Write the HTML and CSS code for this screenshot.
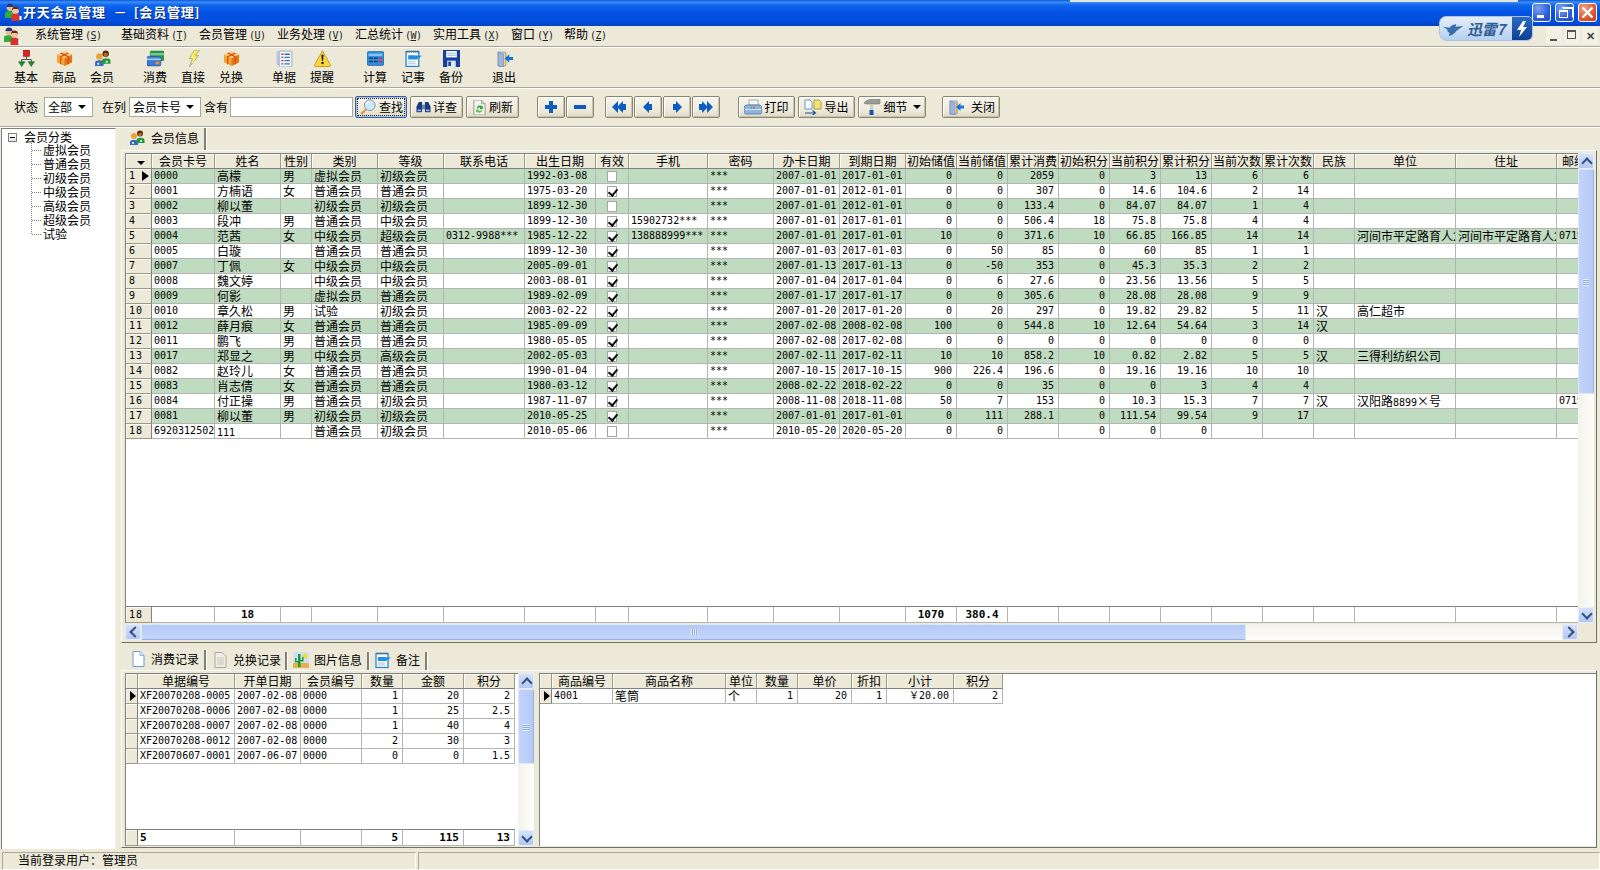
FILE: index.html
```html
<!DOCTYPE html>
<html lang="zh-CN">
<head>
<meta charset="utf-8">
<title>开天会员管理</title>
<link rel="stylesheet" href="styles.css">
</head>
<body>
<svg class="defs" width="0" height="0">
  <symbol id="people" viewBox="0 0 18 18">
    <circle cx="6" cy="4.5" r="3.400" fill="#e9bd93"/><path d="M2.500 4a3.500 3.500 0 0 1 7 0z" fill="#27347f"/><path d="M1 10c0-2.500 9-2.500 9 0v5H1z" fill="#2fae3f"/>
    <circle cx="11.500" cy="7.500" r="3.500" fill="#f3c79c"/><path d="M8 7.500a3.500 3.900 0 0 1 7 0l-1.200-1.500h-4.600z" fill="#6b2710"/><path d="M7.500 12.500c0-2.500 8-2.500 8 0v5.500h-8z" fill="#d8342a"/><path d="M15.500 13h2v4h-2z" fill="#fff"/>
  </symbol>
  <symbol id="members" viewBox="0 0 16 16">
    <circle cx="5" cy="6" r="3" fill="#e8a23c"/><path d="M1 15v-3c0-3 8-3 8 0v3z" fill="#3767c8"/><circle cx="4" cy="13" r="1" fill="#fff"/>
    <circle cx="11" cy="3.500" r="3" fill="#5b2a10"/><circle cx="11" cy="4.500" r="1.800" fill="#b86a2c"/><path d="M7.500 13v-3c0-3 8-3 8 0v3z" fill="#1f9a3a"/><circle cx="12" cy="11" r="1" fill="#fff"/>
  </symbol>
  <symbol id="base" viewBox="0 0 16 16">
    <rect x="5" y="0" width="6" height="6" fill="#e0201c" stroke="#8a1010" stroke-width=".5"/>
    <path d="M8 6v3M3.500 9h9M3.500 9v2M12.500 9v2" stroke="#555" fill="none"/>
    <path d="M0.500 11h6l-3 4.500zM9.500 11h6l-3 4.500z" fill="#1f8f2e" stroke="#0d5f1a" stroke-width=".5"/>
  </symbol>
  <symbol id="box" viewBox="0 0 18 16">
    <path d="M1 4l8-3.500 8 3.500v8l-8 4-8-4z" fill="#f7a62f"/>
    <path d="M1 4l8 4 8-4-8-3.500z" fill="#fbc76a"/><path d="M9 8v8l8-4V4z" fill="#e2771a"/>
    <path d="M5 2.200l8 4M13 2.200l-8 4M5 6v8.200M13 6v8.200" stroke="#d9471a" stroke-width="1.300" fill="none"/>
  </symbol>
  <symbol id="cards" viewBox="0 0 16 16">
    <rect x="3" y="1" width="13" height="9" rx="1" fill="#2f9c4d" stroke="#1c6b31" stroke-width=".5"/><path d="M3 3h13v2H3z" fill="#7ecf8c"/>
    <rect x="0" y="6" width="13" height="9" rx="1" fill="#3a7bd5" stroke="#1c4a8f" stroke-width=".5"/><path d="M0 8h13v1.500H0z" fill="#a8cbf2"/><rect x="8" y="11" width="3.500" height="2.500" fill="#e9902c"/>
  </symbol>
  <symbol id="bolt" viewBox="0 0 16 16">
    <path d="M9 0h5l-4 5h3L4 16l3-8H4z" fill="#f8e23c" stroke="#a0a090" stroke-width=".7"/><path d="M9.500 1l-3 6h2.500L7 12" stroke="#fff79a" fill="none"/>
  </symbol>
  <symbol id="bill" viewBox="0 0 16 16">
    <path d="M1 1.500h3v12H1z" fill="#c9d6ea" stroke="#8ca3c6" stroke-width=".5"/>
    <rect x="3" y="1" width="12" height="15" rx="1" fill="#eef3fb" stroke="#7f9ac4" stroke-width=".7"/>
    <path d="M8 4h5M8 7h5M8 10h5M8 13h5" stroke="#4a6fa8" stroke-width="1.200"/><path d="M5 4h2M5 10h2" stroke="#d8342a" stroke-width="1.200"/><path d="M5 7h2M5 13h2" stroke="#4a6fa8" stroke-width="1.200"/>
  </symbol>
  <symbol id="warn" viewBox="0 0 16 16">
    <path d="M8 .7L15.500 14a1 1 0 0 1-1 1.500H1.500a1 1 0 0 1-1-1.500z" fill="#fbd63a" stroke="#b08a10" stroke-width=".7"/><path d="M6.900 4.500h2.200L8.600 10H7.400z" fill="#222"/><circle cx="8" cy="12.200" r="1.200" fill="#222"/>
  </symbol>
  <symbol id="calc" viewBox="0 0 16 16">
    <rect x="0" y="1.500" width="16" height="13" rx="1.500" fill="#2f8fe0" stroke="#185a9c" stroke-width=".6"/><path d="M1.500 3.500h13v2h-13z" fill="#8cc9f6"/>
    <path d="M2 7h3.500v1.500H2zM2 10h3.500v1.500H2zM6.500 7H10v1.500H6.500zM6.500 10H10v1.500H6.500z" fill="#1d3557"/><path d="M11 7h3.500v1.500H11zM11 10h3.500v1.500H11z" fill="#d8342a"/>
  </symbol>
  <symbol id="note" viewBox="0 0 16 16">
    <rect x="1" y="1.500" width="12" height="14" fill="#f8fbff" stroke="#1f7fd0" stroke-width="1.200"/><path d="M2 .5v2M4 .5v2M6 .5v2M8 .5v2M10 .5v2M12 .5v2" stroke="#55606e" stroke-width=".8"/>
    <path d="M3 5h5L16 5.500 11 9H3z" fill="#1f8fe0"/><path d="M3 11h7M3 13h7" stroke="#a8c3e0"/>
  </symbol>
  <symbol id="disk" viewBox="0 0 16 16">
    <path d="M0 0h16v16H0z" fill="#13419c"/><rect x="3" y="1" width="10" height="6" fill="#fff"/><path d="M4 3h8M4 5h8" stroke="#9cb6e0"/><rect x="4" y="10" width="8" height="6" fill="#dfe7f4"/><rect x="5" y="11" width="2.500" height="4" fill="#13419c"/>
  </symbol>
  <symbol id="door" viewBox="0 0 16 16">
    <path d="M2 2h7v13H2z" fill="#dbe5f2" stroke="#6f8bb5" stroke-width=".7"/><path d="M2 2l5 1.500v12.500L2 15z" fill="#9fb6da" stroke="#5c78a4" stroke-width=".5"/><path d="M9 3v11" stroke="#e8a23c" stroke-width="1.500"/>
    <path d="M16 6.500h-3.500V4L8 8l4.500 4V9.500H16z" fill="#1677d6"/>
  </symbol>
  <symbol id="find" viewBox="0 0 18 18">
    <circle cx="11" cy="7" r="6" fill="#cfe6fb" stroke="#7d98b5" stroke-width="1.100"/><path d="M7.500 6a4 4 0 0 1 4-3" stroke="#fff" stroke-width="1.500" fill="none"/><path d="M6.800 11.500L1.500 17" stroke="#d99a3c" stroke-width="2.400"/>
  </symbol>
  <symbol id="binoc" viewBox="0 0 16 16">
    <path d="M3 2h3.500v11H.5v-6zM9.500 2H13l2.500 5v6h-6z" fill="#1d3b7a"/><path d="M6.500 5h3v5h-3z" fill="#5d7eb8"/><path d="M1.500 10h4v2h-4zM10.500 10h4v2h-4z" fill="#93aee0"/>
  </symbol>
  <symbol id="refresh" viewBox="0 0 16 16">
    <path d="M2 0h8l4 4v12H2z" fill="#f3f5f0" stroke="#7b7f72" stroke-width=".8"/><path d="M10 0v4h4" fill="#cfd3c6" stroke="#7b7f72" stroke-width=".6"/>
    <path d="M5 9a3.200 3.200 0 0 1 5.500-2l1-1v3.500H8l1.200-1.200A2 2 0 0 0 6 9z" fill="#1f9a3a"/><path d="M11 10.500a3.200 3.200 0 0 1-5.500 2l-1 1V10H8l-1.200 1.200a2 2 0 0 0 3.200-.7z" fill="#5dbf4a"/>
  </symbol>
  <symbol id="print" viewBox="0 0 18 16">
    <path d="M5 1h9v5H5z" fill="#f8f8f4" stroke="#8b8f96" stroke-width=".7"/><path d="M2 6h14l2 2v5c0 1-1 2-2 2H2c-1 0-2-1-2-2V8z" fill="#8fb4dd" stroke="#3f6a9e" stroke-width=".7"/><path d="M1 10h16v1H1z" fill="#d6e6f7"/><path d="M6 8.500h2v1H6z" fill="#2fae3f"/><path d="M9 8.500h2v1H9z" fill="#d8342a"/>
  </symbol>
  <symbol id="export" viewBox="0 0 18 16">
    <path d="M1 1h5l2 2v7H1z" fill="#fff" stroke="#3f7fd0" stroke-width=".8"/><path d="M10 1h5l2 2v7h-7z" fill="#f6e27a" stroke="#a08a20" stroke-width=".8"/><path d="M1 14h10M8.500 11.500L11.500 14l-3 2" stroke="#1a4fa0" stroke-width="1.100" fill="none"/>
  </symbol>
  <symbol id="hammer" viewBox="0 0 18 16">
    <path d="M1 4c2-3 6-3.500 8-3.500h8v3.500c0 1-1 1-2 1H5C3 5 2 5 1 4z" fill="#9a9d98" stroke="#5e605c" stroke-width=".5"/><path d="M7 5h3v7H7z" fill="#c9cbc6"/><path d="M6.500 11h4v5h-4z" fill="#1f4fb0"/>
  </symbol>
  <symbol id="doc" viewBox="0 0 16 16">
    <path d="M3 .5h7l4 4v11H3z" fill="#fdfeff" stroke="#6f9ad2"/><path d="M10 .5v4h4" fill="#d7e5f6" stroke="#6f9ad2" stroke-width=".7"/>
  </symbol>
  <symbol id="docg" viewBox="0 0 16 16">
    <path d="M3 .5h7l4 4v11H3z" fill="#efeee6" stroke="#a8a79c"/><path d="M5 6h7M5 8h7M5 10h7M5 12h7" stroke="#c6c5ba"/>
  </symbol>
  <symbol id="cactus" viewBox="0 0 16 16">
    <rect width="16" height="16" fill="#cfe0f4"/><path d="M0 11h16v5H0z" fill="#e6b04c"/><circle cx="12" cy="4" r="2.500" fill="#f7d92c"/><path d="M5 2h2.500v13H5zM2 6h1.500v3H5v1.500H2zM9 5h1.500v4.500h-3V8H9z" fill="#1c9a3a"/>
  </symbol>
  <symbol id="bird" viewBox="0 0 26 20">
    <path d="M1 8l8 1c2-3 5-4 8-4l-1 3 9-1-8 6c-2 3-5 5-9 6l1-4c-2 0-3-2-3-4z" fill="#3a6ea8"/>
  </symbol>
</svg>

<div class="app">
  <header class="titlebar">
    <svg class="ti"><use href="#people"/></svg>
    <span class="ttext">开天会员管理<span class="tdash">－</span>[会员管理]</span>
    <span class="strip"></span>
    <span class="wbtns">
      <span class="wb"><span class="wmin"></span></span>
      <span class="wb"><span class="wmax"></span></span>
      <span class="wb wclose"><svg width="15" height="15" viewBox="0 0 15 15"><path d="M2.500 2.500l10 10M12.500 2.500l-10 10" stroke="#fff" stroke-width="2.400"/></svg></span>
    </span>
  </header>

  <div class="badge">
    <svg class="bird"><use href="#bird"/></svg>
    <span class="btxt">迅雷7</span>
    <span class="bbolt"><svg width="14" height="18" viewBox="0 0 14 18"><path d="M8 1L2 10h4l-2 7 8-10H8l3-6z" fill="#fff"/></svg></span>
  </div>

  <nav class="menubar">
    <svg class="mi"><use href="#people"/></svg>
    <span class="mn first">系统管理<i>(<u>S</u>)</i></span>
    <span class="mn">基础资料<i>(<u>T</u>)</i></span>
    <span class="mn">会员管理<i>(<u>U</u>)</i></span>
    <span class="mn">业务处理<i>(<u>V</u>)</i></span>
    <span class="mn">汇总统计<i>(<u>W</u>)</i></span>
    <span class="mn">实用工具<i>(<u>X</u>)</i></span>
    <span class="mn short">窗口<i>(<u>Y</u>)</i></span>
    <span class="mn">帮助<i>(<u>Z</u>)</i></span>
    <span class="mdi">
      <span class="md"><span class="mdmin"></span></span>
      <span class="md"><span class="mdmax"></span></span>
      <span class="md mdx">✕</span>
    </span>
  </nav>

  <div class="toolbar">
    <div class="tb"><svg class="tbi"><use href="#base"/></svg><span>基本</span></div>
    <div class="tb"><svg class="tbi"><use href="#box"/></svg><span>商品</span></div>
    <div class="tb"><svg class="tbi"><use href="#members"/></svg><span>会员</span></div>
    <div class="tbgap"></div>
    <div class="tb"><svg class="tbi"><use href="#cards"/></svg><span>消费</span></div>
    <div class="tb"><svg class="tbi"><use href="#bolt"/></svg><span>直接</span></div>
    <div class="tb"><svg class="tbi"><use href="#box"/></svg><span>兑换</span></div>
    <div class="tbgap"></div>
    <div class="tb"><svg class="tbi"><use href="#bill"/></svg><span>单据</span></div>
    <div class="tb"><svg class="tbi"><use href="#warn"/></svg><span>提醒</span></div>
    <div class="tbgap"></div>
    <div class="tb"><svg class="tbi"><use href="#calc"/></svg><span>计算</span></div>
    <div class="tb"><svg class="tbi"><use href="#note"/></svg><span>记事</span></div>
    <div class="tb"><svg class="tbi"><use href="#disk"/></svg><span>备份</span></div>
    <div class="tbgap"></div>
    <div class="tb"><svg class="tbi"><use href="#door"/></svg><span>退出</span></div>
  </div>

  <div class="filter">
    <span class="lab">状态</span>
    <span class="sel s1">全部<b class="arr"></b></span>
    <span class="lab l2">在列</span>
    <span class="sel s2">会员卡号<b class="arr"></b></span>
    <span class="lab l3">含有</span>
    <span class="inp"></span>
    <div class="grp g1">
      <button class="btn w52 focus"><svg class="bi18"><use href="#find"/></svg>查找</button>
      <button class="btn w53"><svg class="bi"><use href="#binoc"/></svg>详查</button>
      <button class="btn w53"><svg class="bi"><use href="#refresh"/></svg>刷新</button>
    </div>
    <div class="grp g2">
      <button class="btn nav"><svg class="nv" viewBox="0 0 14 14"><path d="M5 1h4v4h4v4H9v4H5V9H1V5h4z"/></svg></button>
      <button class="btn nav"><svg class="nv" viewBox="0 0 14 14"><path d="M1 5h12v4H1z"/></svg></button>
    </div>
    <div class="grp g3">
      <button class="btn nav"><svg class="nv" viewBox="0 0 14 14"><path d="M0 7l6-6v12zM5 7l6-6v12zM10.500 4H14v6h-3.500z"/></svg></button>
      <button class="btn nav"><svg class="nv" viewBox="0 0 14 14"><path d="M2 7l6-6v3h3v6H8v3z"/></svg></button>
      <button class="btn nav"><svg class="nv" viewBox="0 0 14 14"><path d="M12 7L6 1v3H3v6h3v3z"/></svg></button>
      <button class="btn nav"><svg class="nv" viewBox="0 0 14 14"><path d="M14 7L8 1v12zM9 7L3 1v12zM3.500 4H0v6h3.500z"/></svg></button>
    </div>
    <div class="grp g4">
      <button class="btn w57"><svg class="bi18"><use href="#print"/></svg>打印</button>
      <button class="btn w57"><svg class="bi18"><use href="#export"/></svg>导出</button>
      <button class="btn w68"><svg class="bi18"><use href="#hammer"/></svg>细节<b class="arr"></b></button>
    </div>
    <div class="grp g5">
      <button class="btn w58"><svg class="bi18"><use href="#door"/></svg><span class="sp">关闭</span></button>
    </div>
  </div>

  <main class="main">
    <aside class="tree">
      <div class="troot"><span class="tbox"></span>会员分类</div>
      <ul class="tlist">
        <li>虚拟会员</li><li>普通会员</li><li>初级会员</li><li>中级会员</li><li>高级会员</li><li>超级会员</li><li>试验</li>
      </ul>
    </aside>

    <section class="work">
      <div class="tabs">
        <div class="tab on"><svg class="tabi"><use href="#members"/></svg>会员信息</div>
      </div>

      <div class="frame upper">
        <div class="gridbox">
          <table class="tbl tm">
            <colgroup><col class="c26"><col class="c63"><col class="c66"><col class="c31"><col class="c66"><col class="c66"><col class="c81"><col class="c71"><col class="c33"><col class="c79"><col class="c66"><col class="c66"><col class="c66"><col class="c51"><col class="c51"><col class="c51"><col class="c51"><col class="c51"><col class="c51"><col class="c51"><col class="c51"><col class="c41"><col class="c101"><col class="c101"><col class="c50"></colgroup>
            <thead><tr><th class="gh"><b class="arr"></b></th><th>会员卡号</th><th>姓名</th><th>性别</th><th>类别</th><th>等级</th><th>联系电话</th><th>出生日期</th><th>有效</th><th>手机</th><th>密码</th><th>办卡日期</th><th>到期日期</th><th>初始储值</th><th>当前储值</th><th>累计消费</th><th>初始积分</th><th>当前积分</th><th>累计积分</th><th>当前次数</th><th>累计次数</th><th>民族</th><th>单位</th><th>住址</th><th class="lft">邮编</th></tr></thead>
            <tbody>
<tr class="o"><td class="g cur">1</td><td>0000</td><td>高檬</td><td>男</td><td>虚拟会员</td><td>初级会员</td><td></td><td>1992-03-08</td><td><span class="cb"></span></td><td></td><td>***</td><td>2007-01-01</td><td>2017-01-01</td><td>0</td><td>0</td><td>2059</td><td>0</td><td>3</td><td>13</td><td>6</td><td>6</td><td></td><td></td><td></td><td></td></tr>
<tr><td class="g">2</td><td>0001</td><td>方楠语</td><td>女</td><td>普通会员</td><td>普通会员</td><td></td><td>1975-03-20</td><td><span class="cb on"></span></td><td></td><td>***</td><td>2007-01-01</td><td>2012-01-01</td><td>0</td><td>0</td><td>307</td><td>0</td><td>14.6</td><td>104.6</td><td>2</td><td>14</td><td></td><td></td><td></td><td></td></tr>
<tr class="o"><td class="g">3</td><td>0002</td><td>柳以董</td><td></td><td>初级会员</td><td>初级会员</td><td></td><td>1899-12-30</td><td><span class="cb"></span></td><td></td><td>***</td><td>2007-01-01</td><td>2012-01-01</td><td>0</td><td>0</td><td>133.4</td><td>0</td><td>84.07</td><td>84.07</td><td>1</td><td>4</td><td></td><td></td><td></td><td></td></tr>
<tr><td class="g">4</td><td>0003</td><td>段冲</td><td>男</td><td>普通会员</td><td>中级会员</td><td></td><td>1899-12-30</td><td><span class="cb on"></span></td><td>15902732***</td><td>***</td><td>2007-01-01</td><td>2017-01-01</td><td>0</td><td>0</td><td>506.4</td><td>18</td><td>75.8</td><td>75.8</td><td>4</td><td>4</td><td></td><td></td><td></td><td></td></tr>
<tr class="o"><td class="g">5</td><td>0004</td><td>范茜</td><td>女</td><td>中级会员</td><td>超级会员</td><td>0312-9988***</td><td>1985-12-22</td><td><span class="cb on"></span></td><td>138888999***</td><td>***</td><td>2007-01-01</td><td>2017-01-01</td><td>10</td><td>0</td><td>371.6</td><td>10</td><td>66.85</td><td>166.85</td><td>14</td><td>14</td><td></td><td>河间市平定路育人2号</td><td>河间市平定路育人2号</td><td>0719</td></tr>
<tr><td class="g">6</td><td>0005</td><td>白璇</td><td></td><td>普通会员</td><td>普通会员</td><td></td><td>1899-12-30</td><td><span class="cb on"></span></td><td></td><td>***</td><td>2007-01-03</td><td>2017-01-03</td><td>0</td><td>50</td><td>85</td><td>0</td><td>60</td><td>85</td><td>1</td><td>1</td><td></td><td></td><td></td><td></td></tr>
<tr class="o"><td class="g">7</td><td>0007</td><td>丁佩</td><td>女</td><td>中级会员</td><td>中级会员</td><td></td><td>2005-09-01</td><td><span class="cb on"></span></td><td></td><td>***</td><td>2007-01-13</td><td>2017-01-13</td><td>0</td><td>-50</td><td>353</td><td>0</td><td>45.3</td><td>35.3</td><td>2</td><td>2</td><td></td><td></td><td></td><td></td></tr>
<tr><td class="g">8</td><td>0008</td><td>魏文婷</td><td></td><td>中级会员</td><td>中级会员</td><td></td><td>2003-08-01</td><td><span class="cb on"></span></td><td></td><td>***</td><td>2007-01-04</td><td>2017-01-04</td><td>0</td><td>6</td><td>27.6</td><td>0</td><td>23.56</td><td>13.56</td><td>5</td><td>5</td><td></td><td></td><td></td><td></td></tr>
<tr class="o"><td class="g">9</td><td>0009</td><td>何影</td><td></td><td>虚拟会员</td><td>普通会员</td><td></td><td>1989-02-09</td><td><span class="cb on"></span></td><td></td><td>***</td><td>2007-01-17</td><td>2017-01-17</td><td>0</td><td>0</td><td>305.6</td><td>0</td><td>28.08</td><td>28.08</td><td>9</td><td>9</td><td></td><td></td><td></td><td></td></tr>
<tr><td class="g">10</td><td>0010</td><td>章久松</td><td>男</td><td>试验</td><td>初级会员</td><td></td><td>2003-02-22</td><td><span class="cb on"></span></td><td></td><td>***</td><td>2007-01-20</td><td>2017-01-20</td><td>0</td><td>20</td><td>297</td><td>0</td><td>19.82</td><td>29.82</td><td>5</td><td>11</td><td>汉</td><td>高仁超市</td><td></td><td></td></tr>
<tr class="o"><td class="g">11</td><td>0012</td><td>薛月痕</td><td>女</td><td>普通会员</td><td>普通会员</td><td></td><td>1985-09-09</td><td><span class="cb on"></span></td><td></td><td>***</td><td>2007-02-08</td><td>2008-02-08</td><td>100</td><td>0</td><td>544.8</td><td>10</td><td>12.64</td><td>54.64</td><td>3</td><td>14</td><td>汉</td><td></td><td></td><td></td></tr>
<tr><td class="g">12</td><td>0011</td><td>鹏飞</td><td>男</td><td>普通会员</td><td>普通会员</td><td></td><td>1980-05-05</td><td><span class="cb on"></span></td><td></td><td>***</td><td>2007-02-08</td><td>2017-02-08</td><td>0</td><td>0</td><td>0</td><td>0</td><td>0</td><td>0</td><td>0</td><td>0</td><td></td><td></td><td></td><td></td></tr>
<tr class="o"><td class="g">13</td><td>0017</td><td>郑显之</td><td>男</td><td>中级会员</td><td>高级会员</td><td></td><td>2002-05-03</td><td><span class="cb on"></span></td><td></td><td>***</td><td>2007-02-11</td><td>2017-02-11</td><td>10</td><td>10</td><td>858.2</td><td>10</td><td>0.82</td><td>2.82</td><td>5</td><td>5</td><td>汉</td><td>三得利纺织公司</td><td></td><td></td></tr>
<tr><td class="g">14</td><td>0082</td><td>赵玲儿</td><td>女</td><td>普通会员</td><td>普通会员</td><td></td><td>1990-01-04</td><td><span class="cb on"></span></td><td></td><td>***</td><td>2007-10-15</td><td>2017-10-15</td><td>900</td><td>226.4</td><td>196.6</td><td>0</td><td>19.16</td><td>19.16</td><td>10</td><td>10</td><td></td><td></td><td></td><td></td></tr>
<tr class="o"><td class="g">15</td><td>0083</td><td>肖志倩</td><td>女</td><td>普通会员</td><td>普通会员</td><td></td><td>1980-03-12</td><td><span class="cb on"></span></td><td></td><td>***</td><td>2008-02-22</td><td>2018-02-22</td><td>0</td><td>0</td><td>35</td><td>0</td><td>0</td><td>3</td><td>4</td><td>4</td><td></td><td></td><td></td><td></td></tr>
<tr><td class="g">16</td><td>0084</td><td>付正操</td><td>男</td><td>普通会员</td><td>初级会员</td><td></td><td>1987-11-07</td><td><span class="cb on"></span></td><td></td><td>***</td><td>2008-11-08</td><td>2018-11-08</td><td>50</td><td>7</td><td>153</td><td>0</td><td>10.3</td><td>15.3</td><td>7</td><td>7</td><td>汉</td><td>汉阳路<span class="n">8899</span>×号</td><td></td><td>0719</td></tr>
<tr class="o"><td class="g">17</td><td>0081</td><td>柳以董</td><td>男</td><td>初级会员</td><td>初级会员</td><td></td><td>2010-05-25</td><td><span class="cb on"></span></td><td></td><td>***</td><td>2007-01-01</td><td>2017-01-01</td><td>0</td><td>111</td><td>288.1</td><td>0</td><td>111.54</td><td>99.54</td><td>9</td><td>17</td><td></td><td></td><td></td><td></td></tr>
<tr><td class="g">18</td><td>6920312502</td><td><span class="n">111</span></td><td></td><td>普通会员</td><td>初级会员</td><td></td><td>2010-05-06</td><td><span class="cb"></span></td><td></td><td>***</td><td>2010-05-20</td><td>2020-05-20</td><td>0</td><td>0</td><td></td><td>0</td><td>0</td><td>0</td><td></td><td></td><td></td><td></td><td></td><td></td></tr>
            </tbody>
          </table>
          <table class="tbl tf tm">
            <colgroup><col class="c26"><col class="c63"><col class="c66"><col class="c31"><col class="c66"><col class="c66"><col class="c81"><col class="c71"><col class="c33"><col class="c79"><col class="c66"><col class="c66"><col class="c66"><col class="c51"><col class="c51"><col class="c51"><col class="c51"><col class="c51"><col class="c51"><col class="c51"><col class="c51"><col class="c41"><col class="c101"><col class="c101"><col class="c50"></colgroup>
            <tr><td class="g">18</td><td></td><td class="ctr">18</td><td></td><td></td><td></td><td></td><td></td><td></td><td></td><td></td><td></td><td></td><td class="ctr">1070</td><td class="ctr">380.4</td><td></td><td></td><td></td><td></td><td></td><td></td><td></td><td></td><td></td><td></td></tr>
          </table>
        </div>
        <div class="vsb">
          <span class="sbb up"></span>
          <span class="thumbv big"></span>
          <span class="vtrack"></span>
          <span class="sbb down"></span>
        </div>
        <div class="hsb">
          <span class="sbb left"></span>
          <span class="thumbh"></span>
          <span class="htrack"></span>
          <span class="sbb right"></span>
        </div>
      </div>

      <div class="split"></div>

      <div class="tabs lower">
        <div class="tab on t83"><svg class="tabi"><use href="#doc"/></svg>消费记录</div>
        <div class="tab t81"><svg class="tabi"><use href="#docg"/></svg>兑换记录</div>
        <div class="tab t82"><svg class="tabi"><use href="#cactus"/></svg>图片信息</div>
        <div class="tab t58"><svg class="tabi"><use href="#note"/></svg>备注</div>
      </div>

      <div class="frame bottom">
        <div class="lpane">
          <div class="gridbox">
            <table class="tbl tl">
              <colgroup><col class="c12"><col class="c97"><col class="c66"><col class="c61"><col class="c41"><col class="c61"><col class="c51"></colgroup>
              <thead><tr><th class="gh"></th><th>单据编号</th><th>开单日期</th><th>会员编号</th><th>数量</th><th>金额</th><th>积分</th></tr></thead>
              <tbody>
                <tr><td class="g cur"></td><td>XF20070208-0005</td><td>2007-02-08</td><td>0000</td><td>1</td><td>20</td><td>2</td></tr>
                <tr><td class="g"></td><td>XF20070208-0006</td><td>2007-02-08</td><td>0000</td><td>1</td><td>25</td><td>2.5</td></tr>
                <tr><td class="g"></td><td>XF20070208-0007</td><td>2007-02-08</td><td>0000</td><td>1</td><td>40</td><td>4</td></tr>
                <tr><td class="g"></td><td>XF20070208-0012</td><td>2007-02-08</td><td>0000</td><td>2</td><td>30</td><td>3</td></tr>
                <tr><td class="g"></td><td>XF20070607-0001</td><td>2007-06-07</td><td>0000</td><td>0</td><td>0</td><td>1.5</td></tr>
              </tbody>
            </table>
            <table class="tbl tf tl">
              <colgroup><col class="c12"><col class="c97"><col class="c66"><col class="c61"><col class="c41"><col class="c61"><col class="c51"></colgroup>
              <tr><td class="g"></td><td>5</td><td></td><td></td><td>5</td><td>115</td><td>13</td></tr>
            </table>
          </div>
          <div class="vsb">
            <span class="sbb up"></span>
            <span class="thumbv small"></span>
            <span class="vtrack"></span>
            <span class="sbb down"></span>
          </div>
        </div>
        <div class="rpane">
          <table class="tbl tr2">
            <colgroup><col class="c12"><col class="c61"><col class="c113"><col class="c31"><col class="c41"><col class="c54"><col class="c35"><col class="c67"><col class="c49"></colgroup>
            <thead><tr><th class="gh"></th><th>商品编号</th><th>商品名称</th><th>单位</th><th>数量</th><th>单价</th><th>折扣</th><th>小计</th><th>积分</th></tr></thead>
            <tbody>
              <tr><td class="g cur"></td><td>4001</td><td>笔筒</td><td>个</td><td>1</td><td>20</td><td>1</td><td>￥20.00</td><td>2</td></tr>
            </tbody>
          </table>
        </div>
      </div>
    </section>
  </main>

  <footer class="status">
    <span class="sp1">当前登录用户：管理员</span>
    <span class="sp2"></span>
  </footer>
</div>
</body>
</html>
```

FILE: styles.css
```css
* { box-sizing: border-box; }
html, body { margin: 0; padding: 0; }
body {
  width: 1600px; height: 870px; overflow: hidden; background: #ece9d8;
  font: 12px/14px "Noto Sans CJK SC", sans-serif; color: #000;
}
.defs { position: absolute; }
.app { position: relative; width: 1600px; height: 870px; display: flex; flex-direction: column; overflow: hidden; }

/* title bar */
.titlebar {
  height: 26px; flex: none; display: flex; align-items: center; padding: 0 0 2px 4px; position: relative;
  background: linear-gradient(#0a55d8 0, #3d8ff5 2px, #1067ee 5px, #0353e4 12px, #0350e0 20px, #0443c4 26px);
}
.ti { width: 18px; height: 18px; margin-right: 1px; }
.ttext { color: #fff; font-size: 13px; font-weight: 700; letter-spacing: .8px; text-shadow: 1px 1px 0 #0a2a80; }
.tdash { margin: 0 6px 0 8px; }
.strip { position: absolute; left: 1070px; right: 82px; top: 0; height: 2px; background: #e4e4e0; }
.wbtns { position: absolute; right: 3px; top: 3px; display: flex; gap: 4px; }
.wb {
  width: 19px; height: 19px; border: 1px solid #fff; border-radius: 3px; position: relative;
  background: radial-gradient(circle at 30% 25%, #7ba2f0, #2f5fd8 60%, #2148b8);
  display: flex; align-items: center; justify-content: center;
}
.wclose { background: radial-gradient(circle at 30% 25%, #f0a080, #dc5a32 60%, #c03a18); }
.wmin { width: 7px; height: 3px; background: #fff; position: absolute; left: 4px; bottom: 3px; }
.wmax { width: 9px; height: 8px; border: 1px solid #fff; border-top-width: 2px; position: relative; margin: 2px 2px 0 0; }
.wmax::after { content: ""; position: absolute; left: 2px; top: -5px; width: 9px; height: 8px; border: 1px solid #fff; border-top-width: 2px; border-left-color: transparent; border-bottom-color: transparent; }

/* download badge */
.badge {
  position: absolute; left: 1439px; top: 16px; width: 94px; height: 25px; border-radius: 7px 5px 6px 8px;
  background: linear-gradient(#e4eefb, #b6d0f1); border: 1px solid #a9c3e4; display: flex; align-items: center; overflow: hidden; z-index: 2;
}
.bird { width: 22px; height: 17px; margin-left: 2px; flex: none; }
.btxt { font: italic 700 15px/20px "Noto Sans CJK SC", sans-serif; color: #2f5f95; margin-left: 3px; letter-spacing: -.2px; }
.bbolt { position: absolute; right: 0; top: 0; bottom: 0; width: 20px; background: linear-gradient(#2a6ac4, #0f3f96); display: flex; align-items: center; justify-content: center; }

/* menu */
.menubar {
  height: 21px; flex: none; display: flex; align-items: center; padding: 0 0 1px 3px; position: relative;
  border-bottom: 1px solid #aca899; box-shadow: 0 1px 0 #fff; z-index: 1;
}
.mi { width: 18px; height: 18px; flex: none; }
.mn { width: 78px; flex: none; font-size: 12px; white-space: nowrap; margin-top: -1px; }
.mn.first { margin-left: 14px; width: 86px; }
.mn.short { width: 53px; }
.mn i { font: normal 10px/14px "DejaVu Sans Mono", monospace; margin-left: 2px; letter-spacing: -.5px; color: #222; }
.mdi { position: absolute; right: 2px; top: 1px; display: flex; gap: 2px; }
.md { width: 16px; height: 17px; background: #f3f1e6; position: relative; display: block; color: #444; font-size: 11px; line-height: 17px; text-align: center; font-weight: 700; }
.mdmin { position: absolute; left: 4px; bottom: 3px; width: 7px; height: 2px; background: #555; }
.mdmax { position: absolute; left: 3px; top: 3px; width: 9px; height: 9px; border: 1px solid #555; border-top-width: 2px; }

/* toolbar */
.toolbar {
  height: 41px; flex: none; display: flex; padding: 3px 0 0 7px;
  border-bottom: 1px solid #aca899; box-shadow: 0 1px 0 #fff; position: relative;
}
.tb { width: 38px; display: flex; flex-direction: column; align-items: center; flex: none; font-size: 12px; }
.tb span { margin-top: 3px; line-height: 14px; }
.tbi { width: 17px; height: 17px; display: block; }
.tbgap { width: 15px; flex: none; }

/* filter row */
.filter {
  height: 39px; flex: none; display: flex; align-items: center; padding: 0 0 0 14px;
  border-bottom: 1px solid #aca899; box-shadow: 0 1px 0 #fff; position: relative;
}
.lab { width: 24px; flex: none; }
.l2 { margin-left: 9px; }
.l3 { margin-left: 3px; }
.sel, .inp { height: 20px; background: #fff; border: 1px solid #a8a79c; flex: none; }
.sel { display: flex; align-items: center; padding-left: 3px; justify-content: space-between; padding-right: 6px; }
.s1 { width: 49px; margin-left: 6px; }
.s2 { width: 72px; margin-left: 3px; }
.inp { width: 123px; margin-left: 2px; }
.arr { display: inline-block; width: 0; height: 0; border: 4px solid transparent; border-top: 4px solid #000; border-bottom: 0; }
.grp { display: flex; flex: none; }
.g1 { gap: 3px; margin-left: 2px; }
.g2 { gap: 1px; margin-left: 18px; }
.g3 { gap: 1px; margin-left: 11px; }
.g4 { gap: 3px; margin-left: 18px; }
.g5 { margin-left: 16px; }
.btn {
  height: 22px; padding: 0; font: 12px/14px "Noto Sans CJK SC", sans-serif; color: #000;
  display: flex; align-items: center; justify-content: center; gap: 2px; border-radius: 2px;
  background: linear-gradient(#f7f5ec, #ece9d8 70%, #dcd8c4);
  border: 1px solid #8b8672; box-shadow: inset 1px 1px 0 #fff, inset -1px -1px 0 #c8c4ae;
}
.btn .arr { margin-left: 3px; }
.focus { border-color: #3b5da0; box-shadow: inset 0 0 0 1px #a9c0e8; outline: 1px dotted #222; outline-offset: -3px; }
.w52 { width: 52px; } .w53 { width: 53px; } .w57 { width: 57px; } .w58 { width: 58px; } .w68 { width: 68px; }
.nav { width: 28px; }
.nv { width: 14px; height: 14px; fill: #0d5cc0; }
.bi { width: 15px; height: 15px; }
.bi18 { width: 18px; height: 16px; }
.sp { margin-left: 4px; }

/* main */
.main { flex: 1; display: flex; min-height: 0; padding: 1px 3px 3px 1px; }
.tree {
  width: 115px; flex: none; background: #fff; border-left: 1px solid #808080; border-top: 1px solid #808080;
  border-right: 1px solid #f4f2e8; margin-right: 5px; padding: 1px 0 0 5px;
}
.troot { height: 13px; line-height: 13px; padding-left: 17px; position: relative; }
.tbox { position: absolute; left: 1px; top: 3px; width: 9px; height: 9px; border: 1px solid #808080; background: linear-gradient(#fff, #e6e4da); }
.tbox::after { content: ""; position: absolute; left: 1px; top: 3px; width: 5px; height: 1px; background: #000; }
.tlist { list-style: none; margin: 0 0 0 24px; padding: 0; border-left: 1px dotted #808080; height: 91px; width: 86px; }
.tlist li { height: 14px; padding-left: 11px; position: relative; }
.tlist li::before { content: ""; position: absolute; left: 0; top: 7px; width: 9px; border-top: 1px dotted #808080; }

.work { flex: 1; display: flex; flex-direction: column; min-width: 0; padding-bottom: 1px; }
.tabs { height: 22px; flex: none; display: flex; align-items: flex-start; }
.tab {
  height: 22px; width: 85px; flex: none; display: flex; align-items: center; padding: 0 0 3px 8px; gap: 6px; white-space: nowrap;
  border-right: 2px solid #808075; box-shadow: 1px 0 0 #fff;
}
.tabi { width: 16px; height: 16px; flex: none; }
.tabs.lower { height: 20px; }
.tabs.lower .tab { height: 18px; margin-top: 2px; gap: 5px; padding: 0 0 2px 6px; }
.tabs.lower .tab.on { height: 20px; margin-top: 0; padding: 0 0 3px 9px; }
.t83 { width: 85px; } .t81 { width: 81px; } .t82 { width: 82px; } .t58 { width: 58px; }

.frame { border: 1px solid; border-color: #fff #716f64 #716f64 #fff; flex: none; }
.upper {
  flex: 1; min-height: 0; padding: 2px 2px 2px 3px; display: grid;
  grid-template-columns: 1fr 16px; grid-template-rows: 1fr 16px; row-gap: 1px;
}
.split { height: 7px; flex: none; }
.bottom { height: 178px; padding: 2px 0 1px 3px; display: flex; }

.gridbox { background: #fff; border-left: 1px solid #808080; border-top: 1px solid #808080; display: flex; flex-direction: column; justify-content: space-between; align-items: flex-start; overflow: hidden; min-width: 0; min-height: 0; }
.tbl { border-collapse: separate; border-spacing: 0; table-layout: fixed; flex: none; }
.tm { width: 1481px; }
.tl { width: 389px; }
.tr2 { width: 463px; }
.c12 { width: 12px; } .c26 { width: 26px; } .c31 { width: 31px; } .c33 { width: 33px; } .c35 { width: 35px; } .c41 { width: 41px; }
.c49 { width: 49px; } .c50 { width: 50px; } .c51 { width: 51px; } .c54 { width: 54px; } .c61 { width: 61px; } .c63 { width: 63px; }
.c66 { width: 66px; } .c67 { width: 67px; } .c71 { width: 71px; } .c79 { width: 79px; } .c81 { width: 81px; } .c97 { width: 97px; }
.c101 { width: 101px; } .c113 { width: 113px; }

.tbl th {
  height: 15px; padding: 0; font: 400 12px/14px "Noto Sans CJK SC", sans-serif; text-align: center; background: #ece9d8;
  border-right: 1px solid #9d9a8a; border-bottom: 1px solid #808080; box-shadow: inset 1px 1px 0 #fbfaf3; white-space: nowrap;
}
.tbl th.lft { text-align: left; padding-left: 5px; }
.gh { text-align: right !important; padding-right: 6px !important; }
.gh .arr { vertical-align: middle; }
.tbl td {
  height: 15px; padding: 0 2px; font: 10px/14px "DejaVu Sans Mono", monospace; white-space: nowrap;
  border-right: 1px solid #b4b4b4; border-bottom: 1px solid #b4b4b4;
}
.n { font: 10px/1 "DejaVu Sans Mono", monospace; }
.o td { background: #c0dcc0; }
.tbl td.g {
  background: #ece9d8; border-right-color: #808080; border-bottom-color: #9d9a8a; box-shadow: inset 1px 1px 0 #fbfaf3;
  padding: 0 0 0 3px; letter-spacing: 1px; position: relative;
}
.cur::after { content: ""; position: absolute; right: 2px; top: 2px; border: 5px solid transparent; border-left: 7px solid #000; border-right: 0; }
.tl .cur::after, .tr2 .cur::after { right: 1px; border-left-width: 6px; }

.tm:not(.tf) td:nth-child(n+3):nth-child(-n+6), .tm:not(.tf) td:nth-child(n+22):nth-child(-n+24) { font: 12px/14px "Noto Sans CJK SC", sans-serif; }
.tm td:nth-child(n+14):nth-child(-n+21) { text-align: right; padding-right: 4px; }
.tm td:nth-child(9) { padding: 0; }
.tm td:nth-child(n+23) { padding-right: 0; overflow: hidden; }

.cb { display: block; width: 10px; height: 11px; margin: 1px auto 0; background: #fff; border: 1px solid #a5a5a5; position: relative; }
.cb.on::after { content: ""; position: absolute; left: 2px; top: 0; width: 4px; height: 7px; border: solid #111; border-width: 0 2px 2px 0; transform: rotate(40deg); }

.tbl.tf td { height: 16px; font: 700 11px/15px "DejaVu Sans Mono", monospace; border-top: 1px solid #808080; }
.tbl.tf td.g { font: 10px/14px "DejaVu Sans Mono", monospace; }
.tbl.tf td.ctr { text-align: center; padding: 0; }

.tl td:nth-child(n+5) { text-align: right; padding-right: 4px; }
.tr2 td:nth-child(3), .tr2 td:nth-child(4) { font: 12px/14px "Noto Sans CJK SC", sans-serif; }
.tr2 td:nth-child(n+5) { text-align: right; padding-right: 4px; }

.lpane { width: 409px; flex: none; display: grid; grid-template-columns: 1fr 16px; }
.rpane { flex: 1; background: #fff; margin-left: 5px; border-left: 1px solid #808080; border-top: 1px solid #808080; min-width: 0; }

/* scrollbars */
.vsb { display: flex; flex-direction: column; min-height: 0; }
.hsb { display: flex; grid-column: 1; min-width: 0; }
.sbb {
  flex: none; width: 16px; height: 16px; display: block; position: relative; border-radius: 2px;
  background: linear-gradient(#d4e1fb, #b2c8f3); border: 1px solid #e6edfb;
}
.sbb::after { content: ""; position: absolute; left: 4px; width: 6px; height: 6px; border: solid #37507f; border-width: 2px 0 0 2px; }
.up::after { top: 5px; transform: rotate(45deg); }
.down::after { top: 2px; transform: rotate(225deg); }
.left::after { top: 3px; left: 5px; transform: rotate(-45deg); }
.right::after { top: 3px; left: 2px; transform: rotate(135deg); }
.thumbv { width: 16px; flex: none; border: 1px solid #dfe8fb; border-right-color: #98b1e4; border-radius: 2px; background: linear-gradient(90deg, #c3d4fa, #b4c9f6); position: relative; }
.thumbv::after { content: ""; position: absolute; left: 4px; right: 4px; top: 50%; height: 7px; margin-top: -3px; background: repeating-linear-gradient(#e8efff 0 1px, #8fa9de 1px 2px); }
.big { height: 225px; }
.small { height: 75px; }
.vtrack { flex: 1; background: linear-gradient(90deg, #f4f3ea, #fdfdfb); }
.htrack { flex: 1; background: linear-gradient(#f4f3ea, #fdfdfb); }
.thumbh { flex: none; width: 1105px; border: 1px solid #dfe8fb; border-bottom-color: #98b1e4; border-radius: 2px; background: linear-gradient(#b4c9f6, #c6d6fa); position: relative; }
.thumbh::after { content: ""; position: absolute; top: 4px; bottom: 4px; left: 50%; width: 7px; margin-left: -3px; background: repeating-linear-gradient(90deg, #e8efff 0 1px, #8fa9de 1px 2px); }

/* status */
.status { height: 18px; flex: none; display: flex; padding-left: 2px; }
.sp1 { width: 414px; padding-left: 15px; border: 1px solid; border-color: #aca899 #fff #fff #aca899; line-height: 14px; }
.sp2 { flex: 1; margin-left: 2px; border: 1px solid; border-color: #aca899 #fff #fff #aca899; }
```
